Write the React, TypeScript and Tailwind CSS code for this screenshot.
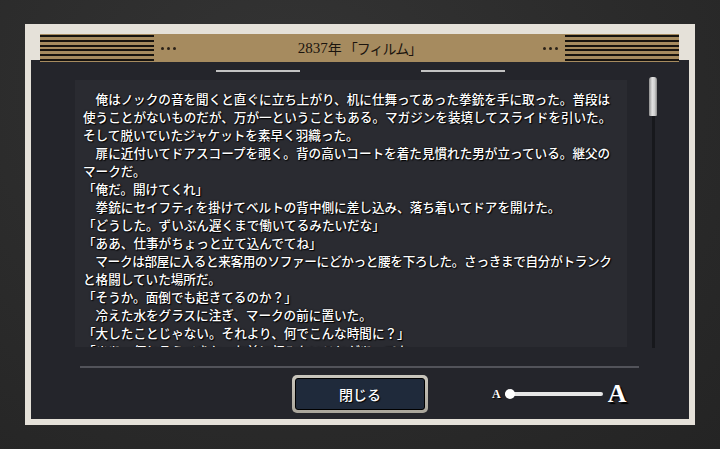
import React from "react";

const lines: string[] = [
  "　俺はノックの音を聞くと直ぐに立ち上がり、机に仕舞ってあった拳銃を手に取った。普段は",
  "使うことがないものだが、万が一ということもある。マガジンを装填してスライドを引いた。",
  "そして脱いでいたジャケットを素早く羽織った。",
  "　扉に近付いてドアスコープを覗く。背の高いコートを着た見慣れた男が立っている。継父の",
  "マークだ。",
  "「俺だ。開けてくれ」",
  "　拳銃にセイフティを掛けてベルトの背中側に差し込み、落ち着いてドアを開けた。",
  "「どうした。ずいぶん遅くまで働いてるみたいだな」",
  "「ああ、仕事がちょっと立て込んでてね」",
  "　マークは部屋に入ると来客用のソファーにどかっと腰を下ろした。さっきまで自分がトランク",
  "と格闘していた場所だ。",
  "「そうか。面倒でも起きてるのか？」",
  "　冷えた水をグラスに注ぎ、マークの前に置いた。",
  "「大したことじゃない。それより、何でこんな時間に？」",
  "「まあ、何と言うべきか。お前に頼みたいことがあってな」",
];

function Stripes() {
  return (
    <div className="w-[114px] h-full flex flex-col justify-between py-[1px]">
      {[0, 1, 2, 3, 4, 5].map((i) => (
        <div key={i} className="h-[2px] bg-[#17130e]" />
      ))}
    </div>
  );
}

function Dots() {
  return (
    <div className="flex gap-[3px]">
      {[0, 1, 2].map((i) => (
        <div key={i} className="w-[3px] h-[3px] rounded-full bg-[#2a2118]" />
      ))}
    </div>
  );
}

export default function App() {
  const jp = "font-['Noto_Sans_CJK_JP',sans-serif]";
  return (
    <div className="w-[720px] h-[449px] overflow-hidden bg-[radial-gradient(ellipse_at_40%_20%,#343434_0%,#2b2b2b_55%,#242424_100%)] pt-[24px] pl-[25px]">
      <div className="w-[670px] h-[401px] bg-[#e5e1d9] pt-[10px] px-[6px] pb-[6px] flex flex-col">
        {/* header */}
        <div className="ml-[9px] mr-[10px] h-[28px] -mb-[2px] relative z-10 bg-[#a68b5f] flex items-center">
          <Stripes />
          <div className="ml-[7px]">
            <Dots />
          </div>
          <div className="flex-1 flex justify-center items-center text-[#1a140e] leading-none">
            <span className="text-[15px] font-['Liberation_Serif','Noto_Sans_CJK_JP',serif]">2837</span>
            <span className={`text-[14px] ${jp}`}>年</span>
            <span className={`ml-[2px] text-[14px] tracking-[-1px] ${jp}`}>「フィルム」</span>
          </div>
          <div className="mr-[7px]">
            <Dots />
          </div>
          <Stripes />
        </div>
        {/* panel */}
        <div className="flex-1 bg-[#24252b] flex flex-col">
          <div className="mt-[10px] flex justify-center gap-[121px]">
            <div className="w-[84px] h-[2px] bg-[#c2c2c2]" />
            <div className="w-[84px] h-[2px] bg-[#c2c2c2]" />
          </div>
          <div className="mt-[8px] pl-[44px] flex items-start">
            <div
              className={`w-[552px] h-[267px] bg-[#2a2b31] overflow-hidden pl-[8px] pt-[10px] text-[12.6px] font-medium leading-[18px] text-white ${jp} [text-shadow:1px_1px_1px_#000,0_0_2px_#000]`}
            >
              {lines.map((l, i) => (
                <div key={i} className={`whitespace-nowrap ${i === 9 ? "tracking-[-0.3px]" : ""}`}>
                  {l}
                </div>
              ))}
            </div>
            <div className="ml-[22px] -mt-[3px] relative w-[8px] h-[271px]">
              <div className="absolute left-[3px] top-0 w-[3px] h-full bg-[#17181c]" />
              <div className="absolute left-0 top-0 w-[8px] h-[39px] rounded-t-[3px] rounded-b-[1px] bg-[linear-gradient(90deg,#8e8e8e_0%,#e2e2e2_40%,#d0d0d0_70%,#8a8a8a_100%)]" />
            </div>
          </div>
          <div className="mt-[18px] ml-[49px] w-[559px] h-[2px] bg-[#52535a]" />
          <div className="mt-[7px] flex items-center">
            <div className="ml-[261px] w-[136px] h-[38px] rounded-[5px] bg-[linear-gradient(180deg,#c9c6bd_0%,#a9a59b_100%)] p-[3px]">
              <div
                className={`h-full rounded-[3px] border border-black bg-[#1f2a3b] flex items-center justify-center text-[14px] font-medium text-white ${jp} [text-shadow:1px_1px_1px_#000]`}
              >
                閉じる
              </div>
            </div>
            <div className="ml-[64px] flex items-center">
              <div className="text-[12px] leading-none text-white font-['Liberation_Serif',serif] font-bold [text-shadow:1px_1px_1px_#000]">
                A
              </div>
              <div className="ml-[4px] relative w-[98px] h-[10px] flex items-center">
                <div className="w-full h-[4px] rounded-full bg-[#e6e6e6]" />
                <div className="absolute left-0 top-0 w-[10px] h-[10px] rounded-full bg-white" />
              </div>
              <div className="ml-[5px] text-[26px] leading-none text-white font-['Liberation_Serif',serif] font-bold [text-shadow:2px_2px_1px_#000]">
                A
              </div>
            </div>
          </div>
        </div>
      </div>
    </div>
  );
}
